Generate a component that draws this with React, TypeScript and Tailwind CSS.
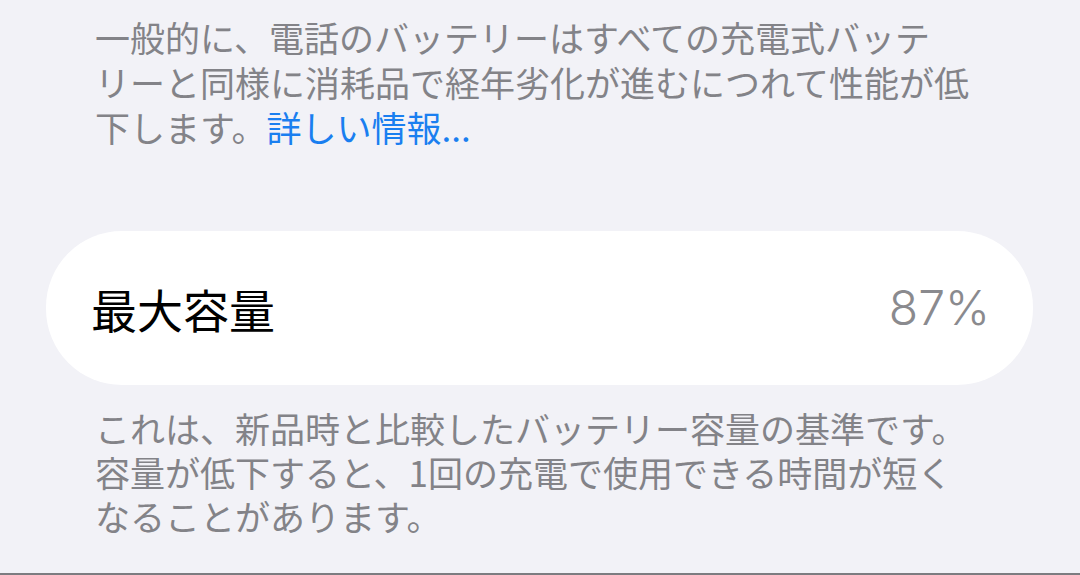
import React from "react";

const jp = { fontFamily: '"Noto Sans CJK JP", "Noto Sans", sans-serif' };

export default function App() {
  return (
    <div
      className="w-[1080px] h-[575px] bg-[#f2f2f7] overflow-hidden flex flex-col relative"
      style={jp}
    >
      <p className="pl-[95px] pt-[14px] text-[35px] leading-[45px] text-[#838388] whitespace-nowrap">
        一般的に、電話のバッテリーはすべての充電式バッテ
        <br />
        リーと同様に消耗品で経年劣化が進むにつれて性能が低
        <br />
        下します。<span className="text-[#1a7ff0]">詳しい情報...</span>
      </p>

      <div className="mt-[82px] ml-[46px] w-[987px] h-[154px] bg-white rounded-[76px] flex items-center justify-between pl-[45px] pr-[43px]">
        <span className="text-[46px] text-black leading-none">最大容量</span>
        <span
          className="text-[48px] text-[#8a8a8e] leading-none font-light"
          style={{ fontFamily: 'Inter, "Noto Sans", sans-serif' }}
        >
          87%
        </span>
      </div>

      <p className="pl-[95px] mt-[21px] text-[35px] leading-[44px] text-[#838388] whitespace-nowrap">
        これは、新品時と比較したバッテリー容量の基準です。
        <br />
        容量が低下すると、1回の充電で使用できる時間が短く
        <br />
        なることがあります。
      </p>

      <div className="absolute left-0 right-0 bottom-0 h-[2px] bg-[#7c7c80]" />
    </div>
  );
}
